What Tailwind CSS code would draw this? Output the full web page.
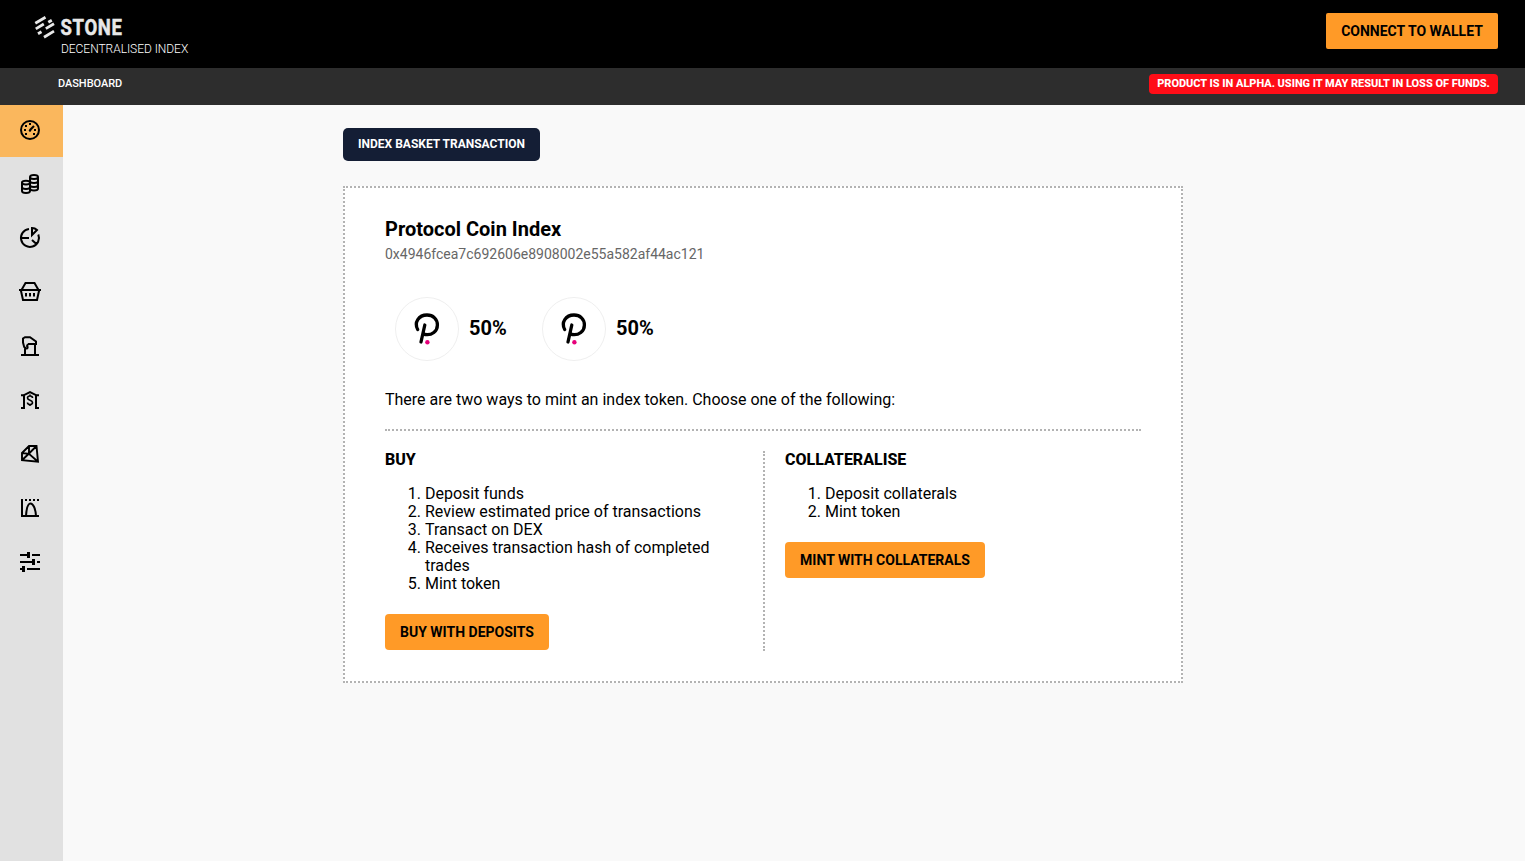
<!DOCTYPE html>
<html lang="en">
<head>
<meta charset="utf-8">
<title>Stone</title>
<script src="https://cdn.jsdelivr.net/npm/@tailwindcss/browser@4"></script>
</head>
<body class="flex h-screen flex-col overflow-hidden bg-[#f9f9f9] font-['Roboto',sans-serif] text-base leading-[18px] text-black">
<header class="flex h-[68px] shrink-0 items-start justify-between bg-black pr-[27px] pl-[34px] pt-[13px] text-white">
  <div class="flex flex-col">
    <svg class="h-[27px] w-[92px]" viewBox="0 0 92 27" fill="none" stroke="#e8e8e8">
      <path stroke-width="2.800" d="M1.300 10.200 11.500 4.200M1.800 15.900 9.800 11M14.300 9.300 17.800 7.200M11.800 15.600 20 10.700M4 20.800 7.500 18.700M10 24.200 20 18.100"/>
      <text transform="translate(26.500 22) scale(.86 1)" fill="#e8e8e8" stroke-width=".5" font-family="Roboto" font-weight="700" font-size="21.500" textLength="71.500" lengthAdjust="spacing">STONE</text>
    </svg>
    <div class="ml-[27px] text-[12px] leading-[18px] font-light tracking-[-0.04px]">DECENTRALISED INDEX</div>
  </div>
  <button class="h-9 w-[172px] rounded-[2px] bg-[#ff9a27] text-sm font-bold text-black">CONNECT TO WALLET</button>
</header>
<nav class="flex h-[37px] shrink-0 items-start justify-between bg-[#2d2d2d] pr-[27px] pl-[58px] pt-[6px] text-[11px] text-white">
  <a class="leading-[19px] font-medium tracking-[-0.05px]">DASHBOARD</a>
  <span class="h-5 w-[349px] rounded-[4px] bg-[#ff0d17] text-center leading-[19px] font-extrabold tracking-[-0.03px]">PRODUCT IS IN ALPHA. USING IT MAY RESULT IN LOSS OF FUNDS.</span>
</nav>
<div class="flex min-h-0 flex-1">
  <aside class="flex w-[63px] shrink-0 flex-col gap-[2px] bg-[#e1e1e1]">
    <a class="h-[52px] bg-[#fab75d] pl-[18px] pt-[13px]"><svg class="size-6" viewBox="0 0 24 24" fill="none" stroke="#000" stroke-width="2"><circle cx="12" cy="12" r="9"/><path d="M12 12 16 8" stroke-width="2.200"/><path d="M11 6h2M7 8h2M6 12h2M16 12h2M7 16h2M15 16h2"/><circle cx="12" cy="12.500" r="1.200" fill="#000" stroke="none"/></svg></a>
    <a class="h-[52px] pl-[18px] pt-[13px]"><svg class="size-6" viewBox="0 0 24 24" fill="none" stroke="#000" stroke-width="2"><path d="M12 5c0-2.700 8-2.700 8 0v11.500c0 2.700-8 2.700-8 0zM12 5c0 2.500 8 2.500 8 0M12 9c0 2.500 8 2.500 8 0M12 13c0 2.500 8 2.500 8 0"/><path fill="#e1e1e1" d="M4 10.500c0-2.500 8-2.500 8 0V19c0 2.700-8 2.700-8 0z"/><path d="M4 10.500c0 2.500 8 2.500 8 0M4 15c0 2.500 8 2.500 8 0"/></svg></a>
    <a class="h-[52px] pl-[18px] pt-[13px]"><svg class="size-6" viewBox="0 0 24 24" fill="none" stroke="#000" stroke-width="2"><path d="M11 3a9 9 0 1 0 9.300 5.500M3 12h8M14 14l5 4.500M14 2v7l5-5c-1.200-1.200-3-2-5-2z"/></svg></a>
    <a class="h-[52px] pl-[18px] pt-[13px]"><svg class="size-6" viewBox="0 0 24 24" fill="none" stroke="#000" stroke-width="2"><path d="M1 10h22M3.500 10 7.500 3h9l4 7M2.800 10 5 20h14l2.200-10M8 13v3.500M12 13v3.500M16 13v3.500"/></svg></a>
    <a class="h-[52px] pl-[18px] pt-[13px]"><svg class="size-6" viewBox="0 0 24 24" fill="none" stroke="#000" stroke-width="2"><path d="M3 21h18M7 21v-8M17 21V9M10 10h8V7.500L12 3.200H7L5 4.500v4L6.200 13l1.800 1.500c2 .2 2-1.500 1-2.500l1-2"/></svg></a>
    <a class="h-[52px] pl-[18px] pt-[13px]"><svg class="size-6" viewBox="0 0 24 24" fill="none" stroke="#000" stroke-width="2"><path d="M3 20h4M17 20h4M6 20V7M18 20V7M3 7.300h2.500L12 4l6.500 3.300H21"/><path d="M14.500 10c0-1.200-1-2-2.500-2s-2.500.8-2.500 2.100c0 2.900 5 1.600 5 4.500 0 1.300-1 2-2.500 2s-2.500-.7-2.500-2M12 6.500V8M12 16.500V18" stroke-width="1.600"/></svg></a>
    <a class="h-[52px] pl-[18px] pt-[13px]"><svg class="size-6" viewBox="0 0 24 24" fill="none" stroke="#000" stroke-width="2"><path d="M4 11 11 4h7.500L20 19.800 4 18.200zM4 11l7 .8L20 19.800M11 4v7.500L4 18.200M18.500 4 11 11.500" stroke-width="1.900"/></svg></a>
    <a class="h-[52px] pl-[18px] pt-[13px]"><svg class="size-6" viewBox="0 0 24 24" fill="none" stroke="#000" stroke-width="2"><path d="M4 3v17h17M7 4h2M11 4h2M15 4h2M19 4h2M8 20C8.500 12 10 7.500 12.500 7.500S17.500 12 18 20"/></svg></a>
    <a class="h-[52px] pl-[18px] pt-[13px]"><svg class="size-6" viewBox="0 0 24 24" fill="none" stroke="#000" stroke-width="2"><path d="M2 5h8M14 5h8M2 12h12M19 12h3M2 19h2M9 19h13"/><path d="M10.500 2v6M15.500 9v6M5.500 16v6" stroke-width="3"/><path d="M8 5h3M13 12h3M3 19h3"/></svg></a>
  </aside>
  <main class="flex-1 pl-[280px] pt-[23px]">
    <button class="block h-[33px] w-[197px] rounded-[5px] bg-[#141e35] pb-px text-xs font-bold text-white">INDEX BASKET TRANSACTION</button>
    <section class="mt-[25px] h-[497px] w-[840px] border-2 border-dotted border-[#b3b3b3] bg-white px-10 pt-[29px]">
      <h1 class="text-xl leading-6 font-bold">Protocol Coin Index</h1>
      <p class="mt-[5px] text-sm leading-4 text-[#666]">0x4946fcea7c692606e8908002e55a582af44ac121</p>
      <div class="mt-[35px] ml-[10px] flex h-16 gap-[35px] text-xl leading-6 font-bold">
        <div class="flex w-28 items-center gap-[10px]">
          <svg class="size-16 shrink-0" viewBox="0 0 64 64" fill="none"><circle cx="32" cy="32" r="31.500" stroke="#efefef"/><path d="M22.700 32.500C18.800 25.500 23.700 18 32 18c6.200 0 10.400 4.300 10.400 9.900 0 6.200-5.400 10.700-12.400 9.600M29.800 28 26 45" stroke="#000" stroke-width="3.300" stroke-linecap="round"/><circle cx="32.400" cy="45.300" r="2.200" fill="#e6007a"/></svg>
          <span class="pb-[2px]">50%</span>
        </div>
        <div class="flex w-28 items-center gap-[10px]">
          <svg class="size-16 shrink-0" viewBox="0 0 64 64" fill="none"><circle cx="32" cy="32" r="31.500" stroke="#efefef"/><path d="M22.700 32.500C18.800 25.500 23.700 18 32 18c6.200 0 10.400 4.300 10.400 9.900 0 6.200-5.400 10.700-12.400 9.600M29.800 28 26 45" stroke="#000" stroke-width="3.300" stroke-linecap="round"/><circle cx="32.400" cy="45.300" r="2.200" fill="#e6007a"/></svg>
          <span class="pb-[2px]">50%</span>
        </div>
      </div>
      <p class="mt-[30px]">There are two ways to mint an index token. Choose one of the following:</p>
      <div class="mt-5 border-t-2 border-dotted border-[#b3b3b3]"></div>
      <div class="mt-5 flex h-[200px]">
        <div class="w-[378px]">
          <h2 class="font-extrabold">BUY</h2>
          <ol class="mt-4 w-[340px] list-decimal pl-10">
            <li>Deposit funds</li>
            <li>Review estimated price of transactions</li>
            <li>Transact on DEX</li>
            <li>Receives transaction hash of completed trades</li>
            <li>Mint token</li>
          </ol>
          <button class="mt-[21px] h-9 w-[164px] rounded-[4px] bg-[#ff9a27] text-sm font-bold">BUY WITH DEPOSITS</button>
        </div>
        <div class="w-[378px] border-l-2 border-dotted border-[#b3b3b3] pl-5">
          <h2 class="font-extrabold">COLLATERALISE</h2>
          <ol class="mt-4 list-decimal pl-10">
            <li>Deposit collaterals</li>
            <li>Mint token</li>
          </ol>
          <button class="mt-[21px] h-9 w-[200px] rounded-[4px] bg-[#ff9a27] text-sm font-bold">MINT WITH COLLATERALS</button>
        </div>
      </div>
    </section>
  </main>
</div>
</body>
</html>
